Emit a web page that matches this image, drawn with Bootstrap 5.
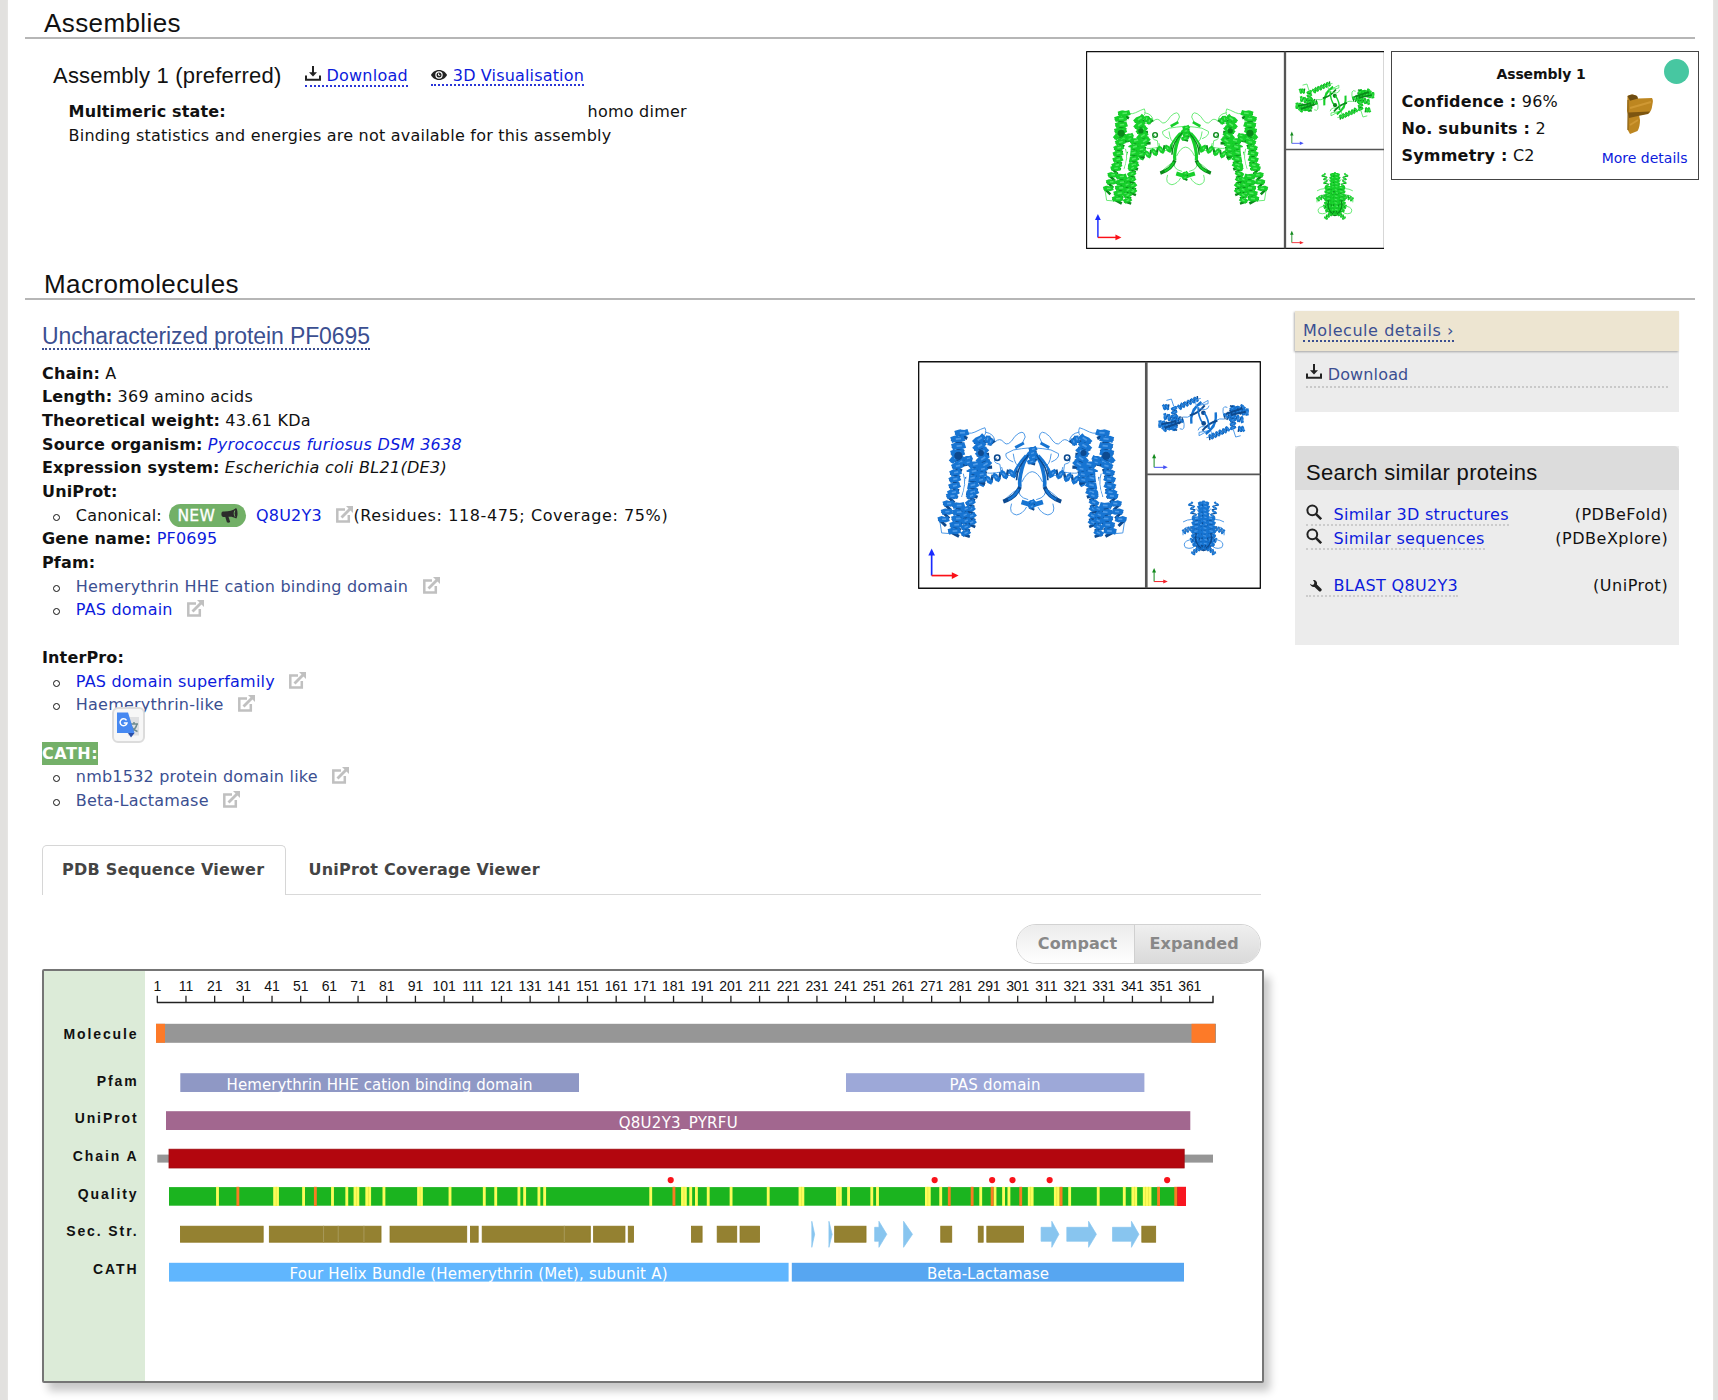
<!DOCTYPE html>
<html lang="en">
<head>
<meta charset="utf-8">
<title>Assemblies and macromolecules</title>
<link rel="stylesheet" href="https://cdn.jsdelivr.net/npm/bootstrap@5.3.0/dist/css/bootstrap.min.css">
<style>
body{background:#e2e1df;font-family:"DejaVu Sans",sans-serif;font-size:16px;color:#111;height:1400px;overflow:hidden;letter-spacing:.22px}
.sheet{margin-left:8px;width:1705px;height:1400px;background:#fff;padding:0 14px 0 17px;box-shadow:0 0 2px #efefed}
.hv{font-family:"Liberation Sans",sans-serif;font-weight:400}
.sec-title{width:1670px;height:39px;padding:9px 0 0 19px;border-bottom:2px solid #b6b6b6;font-size:26px;line-height:28px;letter-spacing:.4px;margin:0}
a{color:#0c1bdc;text-decoration:none}
a.visited{color:#3b4f91}
svg{display:block}
b{font-weight:700;letter-spacing:.14px}
.asm{height:222px}
.asm-left{padding:22.4px 0 0 28px;width:1061px}
.asm-name{font-size:22px;line-height:30px;width:252px;letter-spacing:.22px;margin:0}
.tool{margin-top:4.5px;line-height:20px;height:21.5px;border-bottom:2px dotted #2a35d8;display:flex;gap:5.5px}
.tool.short{height:20px;margin-left:23.5px;letter-spacing:.16px}
.facts{padding-left:15.6px;margin-top:9px;line-height:23.65px}
.facts .state{width:519px}
.shots{margin-top:12px;width:297.5px;height:198px;overflow:hidden}
.asm-card{margin:12px 0 0 7.5px;width:307.5px;height:129px;border:1.5px solid #444;padding:12px 10px 0 9.5px;line-height:27px;position:relative}
.asm-card h4{font-size:14px;font-weight:700;line-height:20px;margin:0 0 4px;text-align:center;padding-right:7px;letter-spacing:-.1px}
.asm-card b{letter-spacing:.2px}
.dot-ok{position:absolute;right:8.5px;top:7px;width:25px;height:25px;border-radius:50%;background:#47c7a1}
.gold{position:absolute;left:233.5px;top:42px}
.more{position:absolute;right:10px;bottom:7px;font-size:14px;letter-spacing:0}
.macro{padding-left:17px}
.maincol{width:1219px}
.mol-title{display:inline-block;margin-top:20.5px;font-size:23px;line-height:30px;height:29.5px;border-bottom:2px dotted #3b4f91;letter-spacing:-.11px}
.info{width:876px;margin-top:11.2px;line-height:23.65px}
.info ul{list-style:none;margin:0;padding:0 0 0 33.8px}
.info em{letter-spacing:.3px}
.info li{position:relative;display:flex;height:23.65px;white-space:pre}
.info li::before{content:"";position:absolute;left:-23px;top:10px;width:7px;height:7px;border:1.7px solid #111;border-radius:50%}
.ext{margin:2px 0 0 14.5px;flex:none}
.new{height:23px;width:77.5px;border-radius:12px;background:#72b067;color:#fff;padding-left:8.5px;margin:0 9.5px 0 7px;line-height:24px;gap:6px;-webkit-text-stroke:.3px #fff;font-size:15.6px}
.cover{letter-spacing:.6px}
.picked{background:#74b069;color:#fff;display:inline-block;height:23.2px;letter-spacing:.5px}
.pop{position:absolute;left:36px;top:14px;width:33px;height:35.5px;border:2px solid #dcdcdc;border-radius:6px;background:#f7f7f7;z-index:2}
.vtabs{margin-top:32px;height:50px;border-bottom:1.5px solid #d9d9d9}
.vtabs .vt{line-height:48.5px;font-weight:700;color:#444;letter-spacing:.22px}
.vtabs .on{width:244px;height:50px;border:1.5px solid #d6d6d6;border-bottom:0;border-radius:5px 5px 0 0;background:#fff;padding-left:19px}
.vtabs .off{padding:1px 0 0 22.5px}
.pill{margin:29px 0 0 auto;width:245.500px;height:40px;border-radius:20px;border:1.5px solid #d2d2d2;overflow:hidden;font-weight:700;color:#888;line-height:37.5px;letter-spacing:.07px}
.pill .l{width:118px;background:linear-gradient(#ececec,#fff);text-align:center;padding-left:5px;border-right:1.5px solid #d0d0d0}
.pill .r{flex:1;background:linear-gradient(#efefef,#dadada);padding-left:15px}
.viewer{margin-top:5px;width:1222px;height:414.5px;border:2px solid #757575;border-radius:2px;box-shadow:6px 8px 8px rgba(0,0,0,.22);background:#fff}
.names{width:101px;background:#dcebd8;font:700 14px "Liberation Sans",sans-serif;letter-spacing:1.9px;text-align:right;padding:44.5px 6.5px 0 0;color:#111}
.names div{height:37.7px;line-height:38px}
.side{margin:11px 0 0 34px;width:384px;letter-spacing:.33px}
.side .tan{background:#ede5d1;height:40px;padding:8px 8px 0;box-shadow:-1px 1px 2px rgba(0,0,0,.3);position:relative}
.side .tan a{display:inline-block;height:21.5px;line-height:21px;border-bottom:2px dotted #3b4f91;white-space:pre;letter-spacing:.55px}
.gbox{background:#ececec}
.dl{margin:0 11.5px 0 10.700px;padding-top:12.500px;height:36.5px;border-bottom:2px dotted #c9c9c9;gap:6px;line-height:22px;letter-spacing:.15px}
.gbox h3{font-size:22px;height:44px;line-height:26px;padding:13.500px 12px 0 11px;background:#dcdcdc;margin:0;border-radius:5px 5px 0 0;letter-spacing:.34px}
.sl{display:flex;justify-content:space-between;padding:0 11px;height:23.65px;line-height:22.6px}
.sl a{display:flex;width:max-content;height:22px;line-height:22px;border-bottom:2px dotted #ccc;letter-spacing:.3px}
.sl span{letter-spacing:.52px;margin-right:-.2px}
.sl i{width:27.5px}
</style>
<script src="https://cdn.jsdelivr.net/npm/bootstrap@5.3.0/dist/js/bootstrap.bundle.min.js"></script>
</head>
<body>
<svg width="0" height="0" class="position-absolute">
<symbol id="i-dl" viewBox="0 0 16 15"><path d="M1 9.500v4.300h14V9.500M8 0v8" fill="none" stroke="#222" stroke-width="2"/><path d="M4 6.300h8L8 10.500z" fill="#222"/></symbol>
<symbol id="i-eye" viewBox="0 0 16 10"><path d="M8 0c4 0 6.800 2.500 8 5-1.200 2.500-4 5-8 5S1.200 7.500 0 5c1.200-2.500 4-5 8-5z" fill="#222"/><circle cx="8" cy="5" r="3.700" fill="#fff"/><circle cx="8" cy="5" r="2.500" fill="#222"/><path d="M7.500 3.500v1.800h1.700" stroke="#fff" fill="none"/></symbol>
<symbol id="i-ext" viewBox="0 0 17 17"><path d="M9 3.500H1.300v12h11.500V9" fill="none" stroke="#c0c0c0" stroke-width="2.500"/><path d="M5.500 11.500 14 3" stroke="#c0c0c0" stroke-width="2.800"/><path d="M10 0h7v7z" fill="#c0c0c0"/></symbol>
<symbol id="i-mag" viewBox="0 0 16 16"><circle cx="6.300" cy="6.300" r="4.900" fill="none" stroke="#222" stroke-width="2"/><path d="m9.800 9.800 5.400 5.400" stroke="#222" stroke-width="2.500"/></symbol>
<symbol id="i-wr" viewBox="0 0 12 12"><path d="M3 0c1.700-.3 3.700.8 4 2.800.1.700 0 1.200-.1 1.600l4.600 4.700c.8 1-.9 3-2.200 2.300L4.500 6.900C2.400 7.300.3 5.800 0 3.700l2.100 1.300 1.900-.8.300-1.900z" fill="#222"/></symbol>
<symbol id="i-horn" viewBox="0 0 17 15"><path d="M15 0c1.700 1 2.200 8 .3 10.500C12.500 8.700 10 8.500 7.500 8.700l1.700 5.300c-1 1-2.500 1-3.300.3L4.300 8.900H2C0 8.700-.3 3.600 2 3.400 7.500 3.500 11.500 3 15 0z" fill="#2b2b2b"/><path d="M13.800 2.500c-.9 2-.8 4.500.2 6.200" stroke="#72b067" fill="none"/></symbol>
</svg>

<div class="sheet">
 <h2 class="sec-title hv">Assemblies</h2>
 <div class="asm d-flex align-items-start">
  <div class="asm-left">
   <div class="d-flex align-items-start">
    <h3 class="asm-name hv">Assembly 1 (preferred)</h3>
    <a class="tool" href="#"><svg width="16" height="15"><use href="#i-dl"/></svg>Download</a>
    <a class="tool short" href="#"><svg width="16" height="10" class="mt-1"><use href="#i-eye"/></svg>3D Visualisation</a>
   </div>
   <div class="facts">
    <div class="d-flex"><div class="state"><b>Multimeric state:</b></div><div>homo dimer</div></div>
    <div>Binding statistics and energies are not available for this assembly</div>
   </div>
  </div>
  <div class="shots"><svg class="protein" data-a="#16cf2a" data-b="#0a8a1a" data-c="#55e864" width="299" height="198" viewBox="54 62 1030 684" preserveAspectRatio="none"></svg></div>
  <div class="asm-card">
   <h4>Assembly 1</h4>
   <div class="dot-ok"></div>
   <div><b>Confidence :</b> 96%</div>
   <div><b>No. subunits :</b> 2</div>
   <div><b>Symmetry :</b> C2</div>
   <svg class="gold" width="28" height="41" viewBox="0 0 28 41"><path d="M1.500 2Q6-1 11 2l1 2.500 14-.5q1.500 2 .5 6-1 8-4 9.500L13 21l1 5q0 7-2.500 11L4 40 1.500 35.500 2 20 1 17z" fill="#bd8620"/><path d="M1.500 2Q6-1 11 2l1 2.500-8 2.300z" fill="#6d4c12"/><path d="M2 18.500 24 17.500l-2 2.500-10 2-9 2z" fill="#7c5510"/><path d="m4 31 8-5M4 14 25 8" stroke="#cf9833" stroke-width="2"/><path d="M2 6v30" stroke="#805a14"/></svg>
   <a class="more" href="#">More details</a>
  </div>
 </div>

 <h2 class="sec-title hv">Macromolecules</h2>
 <div class="macro d-flex align-items-start">
  <div class="maincol">
   <a class="mol-title hv visited" href="#">Uncharacterized protein PF0695</a>
   <div class="d-flex align-items-start">
    <div class="info">
     <div><b>Chain:</b> A</div>
     <div><b>Length:</b> 369 amino acids</div>
     <div><b>Theoretical weight:</b> 43.61 KDa</div>
     <div><b>Source organism:</b> <a href="#"><em>Pyrococcus furiosus DSM 3638</em></a></div>
     <div><b>Expression system:</b> <em>Escherichia coli BL21(DE3)</em></div>
     <div><b>UniProt:</b></div>
     <ul><li>Canonical:<span class="new d-flex">NEW<svg width="17" height="15" class="mt-1"><use href="#i-horn"/></svg></span><a href="#">Q8U2Y3</a><svg class="ext" width="17" height="17"><use href="#i-ext"/></svg><span class="cover">(Residues: 118-475; Coverage: 75%)</span></li></ul>
     <div><b>Gene name:</b> <a href="#">PF0695</a></div>
     <div><b>Pfam:</b></div>
     <ul><li><a class="visited" href="#">Hemerythrin HHE cation binding domain</a><svg class="ext" width="17" height="17"><use href="#i-ext"/></svg></li>
      <li><a href="#">PAS domain</a><svg class="ext" width="17" height="17"><use href="#i-ext"/></svg></li></ul>
     <div style="margin-top:24px"><b>InterPro:</b></div>
     <ul><li><a href="#">PAS domain superfamily</a><svg class="ext" width="17" height="17"><use href="#i-ext"/></svg></li>
      <li><a class="visited" href="#">Haemerythrin-like</a><svg class="ext" width="17" height="17"><use href="#i-ext"/></svg>
       <span class="pop"><svg width="29" height="31" viewBox="0 0 29 31"><path d="M12 8h13v18.500H14z" fill="#dfe0e2"/><path d="M16 15h8M20 13v2m3 0c-.7 3-3 6-6 7.500m0-6c1 2.500 4 5 6.500 6" stroke="#6e8b90" stroke-width="1.500" fill="none"/><path d="M3 3.500h11L20.500 24H3z" fill="#4688f1"/><path d="m14 24 6.500 0-3.500 4.500z" fill="#2a50a8"/><path d="M12.500 11.300A3.500 3.500 0 1 0 13 14H9.800" stroke="#fff" stroke-width="1.500" fill="none"/></svg></span></li></ul>
     <div style="margin-top:24.900px"><b class="picked">CATH:</b></div>
     <ul><li><a class="visited" href="#">nmb1532 protein domain like</a><svg class="ext" width="17" height="17"><use href="#i-ext"/></svg></li>
      <li><a class="visited" href="#">Beta-Lactamase</a><svg class="ext" width="17" height="17"><use href="#i-ext"/></svg></li></ul>
    </div>
    <svg class="protein flex-shrink-0" style="margin-top:10.300px" data-a="#1674d2" data-b="#0d4a90" data-c="#4f9ae6" width="343" height="228" viewBox="54 62 1030 684"></svg>
   </div>
   <div class="vtabs d-flex"><div class="vt on">PDB Sequence Viewer</div><div class="vt off">UniProt Coverage Viewer</div></div>
   <div class="pill d-flex"><div class="l">Compact</div><div class="r">Expanded</div></div>
   <div class="viewer d-flex">
    <div class="names"><div style="margin-bottom:8.800px">Molecule</div><div>Pfam</div><div>UniProt</div><div>Chain A</div><div>Quality</div><div>Sec. Str.</div><div>CATH</div></div>
    <svg id="tracks" width="1117" height="409" viewBox="145 970.200 1117 409"></svg>
   </div>
  </div>
  <div class="side">
   <div class="tan"><a class="visited" href="#">Molecule details ›</a></div>
   <div class="gbox" style="height:60.500px"><div class="dl d-flex"><svg width="16" height="15"><use href="#i-dl"/></svg><a class="visited" href="#">Download</a></div></div>
   <div class="gbox" style="height:198.500px;margin-top:34.500px">
    <h3 class="hv">Search similar proteins</h3>
    <div style="height:14px"></div>
    <div class="sl"><a href="#"><i><svg width="16" height="16"><use href="#i-mag"/></svg></i>Similar 3D structures</a><span>(PDBeFold)</span></div>
    <div class="sl"><a href="#"><i><svg width="16" height="16"><use href="#i-mag"/></svg></i>Similar sequences</a><span>(PDBeXplore)</span></div>
    <div style="height:23.650px"></div>
    <div class="sl"><a href="#"><i class="ps-1"><svg width="12" height="12" style="margin-top:5px"><use href="#i-wr"/></svg></i>BLAST Q8U2Y3</a><span>(UniProt)</span></div>
   </div>
  </div>
 </div>
</div>

<script>
/* sequence tracks */
(function(){
 let s='';
 const R=(x1,x2,y,h,f,st)=>{s+=`<rect x="${x1}" y="${y}" width="${x2-x1}" height="${h}" fill="${f}"${st?` stroke="${st}" stroke-width=".8"`:''}/>`};
 const T=(x,y,t,w)=>{s+=`<text x="${x}" y="${y}" text-anchor="middle" letter-spacing="0" fill="#fff" font-family="DejaVu Sans, sans-serif" font-size="15" textLength="${w}">${t}</text>`};
 for(let r=1;r<=361;r+=10){const x=157.3+(r-1)*2.868;
  s+=`<path d="M${x} 995v7" stroke="#222" stroke-width="1.300"/><text x="${x}" y="989.800" text-anchor="middle" letter-spacing="-.1" font-family="Liberation Sans, sans-serif" font-size="14" fill="#111">${r}</text>`}
 s+='<path d="M157 1001.700H1213.500M1213 995v7" stroke="#222" stroke-width="1.500" fill="none"/>';
 R(156,1216,1023,19,'#969696');R(156,165,1023,19,'#fd7a28');R(1191.5,1215.3,1023,19,'#fd7a28');
 R(180.300,579,1072.400,18.800,'#8f98c5');R(846,1144.400,1072.400,18.800,'#9da8d8');
 R(166,1190.300,1110.400,18.800,'#a2678f');
 R(157.300,169,1153.800,8,'#969696');R(1184,1213,1153.800,8,'#969696');
 R(169,1184.200,1148.400,18.800,'#b3060e','#9d0a0f');
 R(169,1185.500,1186.300,18.600,'#1bb41f');
 const q=(a,f)=>a.forEach(v=>{const [c,n]=[].concat(v),w=(n||1)*2.868;const x=150+c/2.8-w/2;R(x,x+w,1186,19.200,f);
  if(n>1)for(let i=1;i<n;i++)R(x+w*i/n-.2,x+w*i/n+.3,1186,19.200,'#d9dc3c')});
 q([189,[353,2],430,511,551,[578,2],[611,2],655,[756,2],840,936,968,1033,1049,1089,1105,1402,[1495,2],1514,1530,1563,1627,1731,[1824,2],[1929,2],1956,2021,2037,[2178,2],2214,2326,2366,2390,2405,[2466,2],[2539,2],2575,2655,2728,[2756,2],[2792,3]],'#fcfc5a');
 q([246,463,1467,2238,2302,2358,2438,2551,2824,2872],'#f97c22');
 R(1177.200,1186,1186,19.200,'#f81620');
 [1458,2197,2358,2415,2519,2848].forEach(z=>s+=`<circle cx="${150+z/2.8}" cy="1179.300" r="3.100" fill="#f9121a"/>`);
 [[84,318],[333,648],[671,888],[896,920],[929,1234],[1241,1331],[1338,1355],[1515,1547],[1587,1644],[1651,1708],[1916,2006],[2213,2246],[2318,2334],[2342,2447],[2776,2817]].forEach(a=>R(150.400+a[0]/2.8,149.600+a[1]/2.8,1225.400,16,'#948131','#8b7620'));
 [486,527,599,1160].forEach(z=>s+=`<path d="M${150+z/2.8} 1225v17" stroke="#a8995a"/>`);
 [[1853,1853,1861],[1901,1901,1910],[2029,2041,2063],[2110,2110,2135],[2495,2525,2545],[2567,2628,2650],[2695,2748,2769]].forEach(a=>{
  const [b,h,e]=a.map(z=>150+z/2.8);s+=`<path d="M${b} 1226.500H${h}V1220.500L${e} 1233.500 ${h} 1246.500V1240.500H${b}z" fill="#88c5ef" stroke="#88c5ef" stroke-width=".7"/>`});
 R(169,788.600,1262,18.800,'#60b6fe');R(791.800,1184,1262,18.800,'#57a6f1');
 T(379.600,1089,'Hemerythrin HHE cation binding domain',306);T(995,1089,'PAS domain',91);T(678.200,1126.800,'Q8U2Y3<tspan dy="-1.800">_</tspan><tspan dy="1.800">PYRFU</tspan>',119);
 T(478.500,1278.500,'Four Helix Bundle (Hemerythrin (Met), subunit A)',378);T(988,1278.500,'Beta-Lactamase',122);
 document.getElementById('tracks').innerHTML=s;
})();

/* ribbon cartoons: front, top and side view of the dimer */
document.querySelectorAll('.protein').forEach(el=>{
 const {a,b,c}=el.dataset;
 let seed=7;const rnd=()=>(seed=(seed*16807)%2147483647)/2147483647-.5;
 const coil=(x1,y1,x2,y2,w,p,t)=>{
  const L=Math.hypot(x2-x1,y2-y1),n=Math.max(2,Math.round(L/p)),ux=(x2-x1)/L,uy=(y2-y1)/L,nx=-uy,ny=ux;let back='',front='',hi='';
  for(let i=0;i<n;i++){const j=rnd()*w*.25,P=(k,sd)=>{const d=L*k/n;return (x1+ux*d+nx*(sd*w/2+j)).toFixed(1)+' '+(y1+uy*d+ny*(sd*w/2+j)).toFixed(1)};
   front+=`M${P(i,-1)}L${P(i+.3,-.4)}L${P(i+.35,.4)}L${P(i+.65,1)}`;back+=`M${P(i+.5,1)}L${P(i+1,-1)}`;hi+=`M${P(i+.2,-.5)}L${P(i+.4,.3)}`}
  return `<path d="${back}" stroke="${b}" stroke-width="${t*.55}"/><path d="${front}" stroke="${a}" stroke-width="${t}"/><path d="${hi}" stroke="${c}" stroke-width="${t*.3}"/>`};
 const loop=(d,w=3)=>`<path d="${d}" stroke="${c}" stroke-width="${w}"/>`;
 const rib=(d,w=9,col=a)=>`<path d="${d}" stroke="${col}" stroke-width="${w}"/>`;
 const half=
  loop('M180 268Q205 285 225 275T255 262Q262 280 250 288M255 275Q285 280 285 305Q300 290 312 306T345 288Q372 262 376 290Q370 312 352 322M340 365Q315 355 318 340Q340 325 365 325L395 322M292 352Q272 365 300 372L303 395Q275 400 262 398M340 340Q345 380 360 375M312 480Q345 450 352 448M335 490Q325 520 350 524Q370 520 380 500M120 545L125 578 150 580M212 545L224 552M358 440Q350 470 385 478M366 425Q380 395 397 394M190 400Q200 430 185 470M160 300L185 290M335 405Q310 410 305 380')
  +coil(182,270,168,350,38,22,18)+coil(168,345,184,380,40,16,17)+coil(172,370,160,470,30,22,17)+coil(160,460,124,552,28,22,16)
  +coil(206,350,205,375,24,18,14)+coil(232,292,262,385,36,20,18)+coil(222,365,217,470,34,21,18)+coil(214,460,213,560,24,20,15)
  +coil(180,490,160,585,34,19,17)+coil(196,500,200,590,24,20,15)+coil(258,296,278,310,20,14,14)
  +coil(235,428,352,393,22,24,14)+coil(245,380,240,430,28,18,15)
  +`<circle cx="175" cy="346" r="12" fill="${b}" stroke="none"/><circle cx="243" cy="338" r="9" fill="${b}" stroke="none"/><circle cx="292" cy="352" r="8" stroke="${b}" stroke-width="5"/>`
  +`<path d="M204 395Q203 430 191 470" stroke="#fff" stroke-width="8"/>`
  +rib('M397 330Q375 350 366 385T360 440',11)+rib('M385 345Q350 380 350 420',5,b)+rib('M360 440Q350 470 310 484',12,b)+rib('M356 446Q348 466 325 478',7)+rib('M346 322L372 308',9)+rib('M365 485L397 495',14)+rib('M378 345Q350 375 340 405',7);
 const top=
  loop('M800 180L815 176 822 198 850 200M850 230Q880 235 880 205L925 180 925 190 890 196M895 270Q900 250 930 265Q945 290 920 292M840 265Q860 275 850 235')
  +coil(790,200,808,198,16,9,8)+coil(836,202,896,174,15,12,8)+coil(792,228,840,238,18,12,9)+coil(778,248,830,262,20,11,10)+coil(823,200,825,270,16,11,9)+coil(790,270,850,235,16,12,7)+rib('M905 185Q870 210 875 250',7)+rib('M915 195Q895 220 870 225',6,b)+rib('M895 200Q895 230 910 250',5)+rib('M785 252L830 242M795 262L845 245',6,b)+`<circle cx="911" cy="217" r="7" fill="${b}"/>`;
 const side=
  loop('M905 545Q875 530 850 545M870 560Q845 560 850 585M872 598Q845 605 857 622Q880 630 890 610M890 505L900 520')
  +coil(873,486,885,535,14,12,6)+coil(850,576,885,562,14,10,6)+coil(905,485,905,560,20,11,11)+coil(892,530,888,620,24,13,11)+coil(905,560,903,630,22,12,11)+coil(872,600,900,600,14,9,6)+coil(877,640,908,618,12,10,7)+rib('M890 580Q880 605 905 625',4,b);
 const ax=(x,y,l,v,h,t)=>`<path d="M${x} ${y}V${y-l+8}" stroke="${v}" stroke-width="${t}"/><path d="M${x} ${y}H${x+l-8}" stroke="${h}" stroke-width="${t}"/><path d="M${x-t*2} ${y-l+t*3.5}L${x} ${y-l-3}L${x+t*2} ${y-l+t*3.5}z" fill="${v}" stroke="none"/><path d="M${x+l-t*3.5} ${y-t*2}L${x+l+3} ${y}L${x+l-t*3.5} ${y+t*2}z" fill="${h}" stroke="none"/>`;
 el.innerHTML=`<rect x="54" y="62" width="1030" height="684" fill="#fff"/><g fill="none" stroke-linejoin="round">
  <g>${half}</g><g transform="translate(794 0) scale(-1 1)">${half}</g>${coil(397,322,397,372,22,14,13)}${coil(397,480,397,508,16,12,12)}
  ${top}<g transform="rotate(180 911.500 233)">${top}</g>
  ${side}<g transform="translate(1823 0) scale(-1 1)">${side}</g>
  ${ax(95,706,78,'#1a2bff','#fb1018',5)}${ax(763,381,38,'#128a1c','#4350f5',3)}${ax(763,724,38,'#128a1c','#f32028',3)}
  <path d="M56 64H1082V744H56z" stroke="#111" stroke-width="4"/><path d="M739.500 64V744" stroke="#555" stroke-width="8"/><path d="M742 402H1082" stroke="#555" stroke-width="5"/></g>`;
});
</script>
</body>
</html>
